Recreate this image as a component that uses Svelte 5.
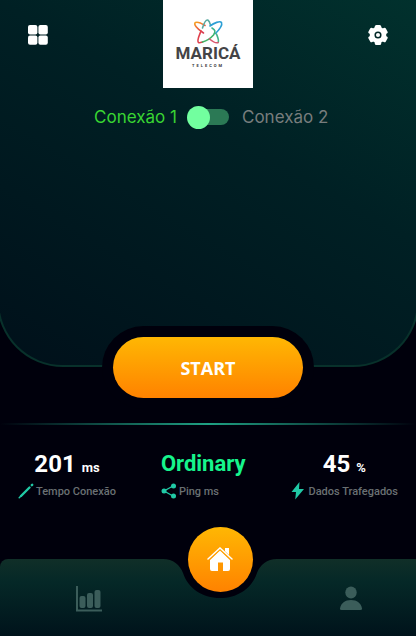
<script lang="ts">
  let second = $state(false);
</script>

<div class="page">
  <header class="panel">
    <div class="topbar">
      <button class="icon" aria-label="Menu">
        <svg width="20" height="20" viewBox="0 0 20 20" fill="#fff">
          <rect width="9.4" height="9.4" rx="2" /><rect x="10.4" width="9.4" height="9.4" rx="2" />
          <rect y="10.4" width="9.4" height="9.4" rx="2" /><rect x="10.4" y="10.4" width="9.4" height="9.4" rx="2" />
        </svg>
      </button>
      <div class="logo">
        <svg width="90" height="88" viewBox="0 0 90 88" role="img" aria-label="Maricá Telecom">
          <defs>
            <linearGradient id="warm" x1="0" y1="0" x2="0.5" y2="1">
              <stop offset="0" stop-color="#f8a51b" /><stop offset="0.5" stop-color="#ef6b3b" /><stop offset="1" stop-color="#d83a50" />
            </linearGradient>
            <linearGradient id="cool" x1="0" y1="0" x2="0.4" y2="1">
              <stop offset="0" stop-color="#35b5a8" /><stop offset="1" stop-color="#44b35a" />
            </linearGradient>
          </defs>
          <g fill="none" stroke-width="1.6" stroke-linecap="round">
            <path d="M40.500 33C34 29 30 24 32.500 22.500C35 21.500 38 23 42 25.500" stroke="url(#warm)" />
            <path d="M38 31C36 36 33.500 41 35.500 42.500C36.500 43 38 42.500 39.500 42" stroke="#e0404c" />
            <path d="M39.500 28C41 23 43 19.500 44.800 20C46.500 21 47 23 47.500 25" stroke="#59a9a0" />
            <path d="M47 26C51 23 57 20.500 58.500 22.500C59.500 25 56 30 52.500 33.500" stroke="#2b9fd5" />
            <path d="M49 28C52 30 53 31 50.500 35C47 39 43 41 39.500 42" stroke="url(#cool)" />
            <path d="M53.500 34C55 38 56.500 41 55 42.500" stroke="#44b38a" />
            <path d="M46.500 39C49 41 53 43.500 55 42.500" stroke="#d95870" />
          </g>
          <text class="brand" x="45" y="59" text-anchor="middle">MARICÁ</text>
          <text class="sub" x="45" y="67" text-anchor="middle">TELECOM</text>
        </svg>
      </div>
      <button class="icon" aria-label="Configurações">
        <svg width="20" height="20" viewBox="0 0 20 20">
          <g fill="#fff">
            <circle cx="10" cy="10" r="8.300" />
            {#each [0, 60, 120] as turn}
              <rect x="6.800" y="0" width="6.400" height="20" rx="1.600" transform="rotate({turn} 10 10)" />
            {/each}
          </g>
          <circle cx="10" cy="10" r="2.800" fill="none" stroke="#022827" stroke-width="1.500" />
        </svg>
      </button>
    </div>
    <div class="connection">
      <label class:on={!second} for="connection">Conexão 1</label>
      <input id="connection" type="checkbox" role="switch" bind:checked={second} />
      <label class:on={second} for="connection">Conexão 2</label>
    </div>
  </header>

  <main>
    <button class="start">START</button>
    <div class="line"></div>
    <section class="stats">
      <div class="stat">
        <p class="value">201 <small>ms</small></p>
        <p class="name">
          <svg width="16" height="16" viewBox="0 0 16 16" fill="none" stroke="#20c9a6" stroke-linecap="round"><path d="M3 13L11.500 4.500" stroke-width="2.400" /><path d="M1.200 14.800L3 13" stroke-width="1.500" /><path d="M13.800 2.200l.4-.4" stroke-width="2.400" /></svg>
          Tempo Conexão
        </p>
      </div>
      <div class="stat ping">
        <p class="value">Ordinary</p>
        <p class="name">
          <svg width="16" height="16" viewBox="0 0 16 16" fill="#20c9a6"><path d="M12 3L3 8l9 5" fill="none" stroke="#20c9a6" stroke-width="1.300" /><circle cx="12.500" cy="3" r="2.500" /><circle cx="3" cy="8" r="2.500" /><circle cx="12.500" cy="13" r="2.500" /></svg>
          Ping ms
        </p>
      </div>
      <div class="stat">
        <p class="value">45 <small>%</small></p>
        <p class="name">
          <svg width="16" height="18" viewBox="0 0 16 18" fill="#20c9a6"><path d="M9.500 0L1.500 10H6L5.200 17.500 14 7H9z" /></svg>
          Dados Trafegados
        </p>
      </div>
    </section>
  </main>

  <nav>
    <div class="shape">
      <span class="side left"></span>
      <svg width="114" height="77" viewBox="0 0 114 77">
        <defs>
          <linearGradient id="bar" x1="0" y1="0" x2="0" y2="1">
            <stop offset="0" stop-color="#102f28" /><stop offset="0.3" stop-color="#052827" /><stop offset="1" stop-color="#00131b" />
          </linearGradient>
        </defs>
        <path d="M0 0C10 0 17 6 20 14C25 29 39 39 57 39S89 29 94 14C97 6 104 0 114 0V77H0z" fill="url(#bar)" />
      </svg>
      <span class="side"></span>
    </div>
    <div class="items">
      <a href="#stats" aria-label="Estatísticas">
        <svg width="26" height="26" viewBox="0 0 26 26" fill="#3b5d5a"><path d="M0 0h2v23.500h24v2H0z" /><rect x="3.500" y="10" width="6" height="12" rx="2" /><rect x="11" y="7" width="6" height="15" rx="2" /><rect x="18.500" y="4" width="6" height="18" rx="2" /></svg>
      </a>
      <a class="home" href="#home" aria-label="Início">
        <svg width="26" height="24" viewBox="0 0 26 24" fill="#fff"><path d="M13 3.500L23 13v9q0 2-2 2h-5v-8.500h-5V24H5q-2 0-2-2v-9z" /><path d="M1 12L13 1l12 11" fill="none" stroke="#fff" stroke-width="1.500" stroke-linecap="round" /><path d="M18 1h4v7l-4-3.700z" /><path d="M2 13.200L13 3.100l11 10.100" fill="none" stroke="#ff9f08" stroke-width="0.700" /></svg>
      </a>
      <a href="#profile" aria-label="Perfil">
        <svg width="24" height="26" viewBox="0 0 24 26" fill="#3b5d5a"><ellipse cx="12" cy="6.500" rx="5.700" ry="6" /><path d="M1 22.500C2 17 6 14 12 14s10 3 11 8.500q.2 1.500-1.500 1.500h-19Q.8 24 1 22.500z" /></svg>
      </a>
    </div>
  </nav>
</div>

<style>
  :global(body) {
    margin: 0;
    background: #00000c;
  }
  .page {
    min-height: 100vh;
    display: flex;
    flex-direction: column;
    overflow: hidden;
    background: #00000c;
    font-family: Roboto, "Liberation Sans", sans-serif;
  }
  .panel {
    box-sizing: border-box;
    min-height: 367px;
    margin: 0 -3px;
    border: 2px solid #08312b;
    border-top: 0;
    border-radius: 0 0 66px 66px;
    background: linear-gradient(30deg, #00101a, #002024 60%, #01312d);
  }
  .topbar {
    display: flex;
    justify-content: space-between;
    align-items: flex-start;
    padding: 0 29px;
  }
  button {
    border: 0;
    padding: 0;
    background: none;
    cursor: pointer;
  }
  .icon {
    margin-top: 25px;
    width: 20px;
    height: 20px;
  }
  svg {
    display: block;
    flex: none;
  }
  .logo {
    background: #fff;
  }
  .brand {
    font: 700 17px Roboto, sans-serif;
    fill: #444446;
  }
  .sub {
    font: 700 4px Roboto, sans-serif;
    letter-spacing: 2px;
    fill: #38383a;
  }
  .connection {
    display: grid;
    grid-template-columns: 1fr 42px 1fr;
    align-items: center;
    margin-top: 17px;
    line-height: 24px;
    font-family: Inter, sans-serif;
    font-size: 17px;
  }
  .connection label {
    color: #787d7d;
    padding: 0 13px;
  }
  .connection label:first-child {
    text-align: right;
    padding-right: 10px;
  }
  .connection .on {
    color: #39d532;
  }
  input {
    appearance: none;
    display: flex;
    align-items: center;
    margin: 0;
    width: 42px;
    height: 23px;
    cursor: pointer;
  }
  input::before {
    content: "";
    width: 23px;
    height: 23px;
    border-radius: 50%;
    background: #72ff9f;
    z-index: 1;
  }
  input::after {
    content: "";
    width: 36px;
    height: 16px;
    margin-left: -17px;
    border-radius: 8px;
    background: #2b7955;
  }
  input:checked {
    flex-direction: row-reverse;
  }
  input:checked::after {
    margin: 0 -17px 0 0;
  }
  main {
    flex: 1;
  }
  .start {
    position: relative;
    display: block;
    width: 190px;
    height: 61px;
    margin: -30px auto 0;
    border-radius: 31px;
    background: linear-gradient(#ffb703, #ff8200);
    box-shadow: 0 0 0 11px #00000c;
    color: #fff;
    font: 700 18px "Open Sans", "Noto Sans", sans-serif;
  }
  .line {
    height: 2px;
    margin-top: 25px;
    background: linear-gradient(to right, transparent, #1fa184, transparent);
  }
  .stats {
    display: flex;
    justify-content: space-between;
    padding: 22px 18px 0;
  }
  p {
    margin: 0;
  }
  .value {
    color: #fff;
    font-size: 24px;
    font-weight: 700;
    line-height: 34px;
    text-align: center;
  }
  small {
    font-size: 13px;
    line-height: 1;
  }
  .name {
    display: flex;
    align-items: center;
    gap: 2px;
    height: 20px;
    color: #6a7073;
    font-size: 11px;
    font-weight: 500;
    white-space: nowrap;
  }
  .ping .value {
    color: #16f58c;
    font-size: 22px;
    text-align: left;
  }
  nav {
    display: grid;
    width: calc(100% + 24px);
  }
  .shape,
  .items {
    grid-area: 1 / 1;
  }
  .shape {
    display: flex;
  }
  .side {
    flex: 1;
    background: linear-gradient(#102f28, #052827 30%, #00131b);
  }
  .left {
    border-top-left-radius: 8px;
  }
  .items {
    display: grid;
    grid-template-columns: 1fr 84px 1fr;
    justify-items: center;
    align-items: center;
    padding-top: 2px;
  }
  .home {
    display: grid;
    place-items: center;
    width: 65px;
    height: 65px;
    margin-top: -79px;
    border-radius: 50%;
    background: linear-gradient(#ffb703, #ff8200);
  }
</style>
